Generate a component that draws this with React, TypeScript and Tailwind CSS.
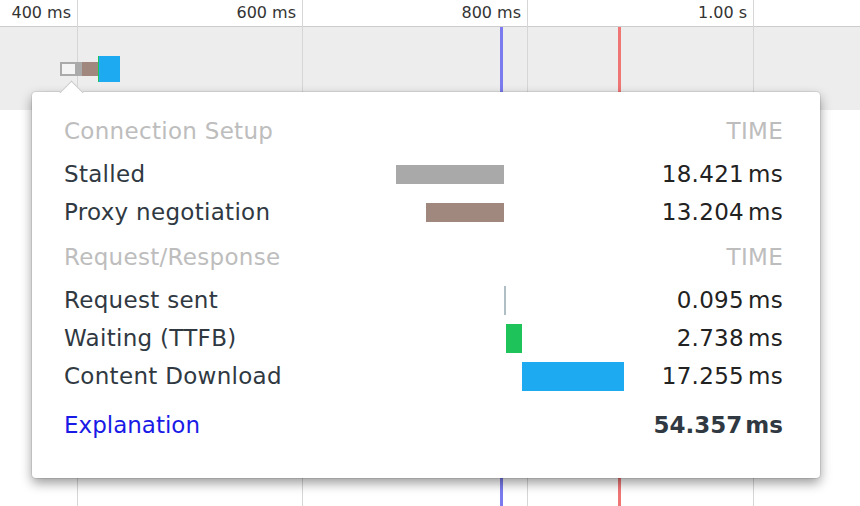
import React from "react";

/* Timeline ticks: x of the grid line and the label right-aligned to it. */
const ticks = [
  { x: 77, label: "400 ms" },
  { x: 302, label: "600 ms" },
  { x: 527, label: "800 ms" },
  { x: 753, label: "1.00 s" },
];

type Row = {
  label: string;
  value: string;
  /* Bar offset + width inside the 260px bar column. */
  left: number;
  width: number;
  color: string;
};

const setupRows: Row[] = [
  { label: "Stalled", value: "18.421", left: 16, width: 108, color: "#a9a9a9" },
  { label: "Proxy negotiation", value: "13.204", left: 46, width: 78, color: "#a1887f" },
];

const requestRows: Row[] = [
  { label: "Request sent", value: "0.095", left: 124, width: 2, color: "#b0bec5" },
  { label: "Waiting (TTFB)", value: "2.738", left: 126, width: 16, color: "#1ec45a" },
  { label: "Content Download", value: "17.255", left: 142, width: 102, color: "#1eaaf1" },
];

function SectionHeader({ title, className }: { title: string; className?: string }) {
  return (
    <div className={`flex h-[38px] items-center justify-between text-[#bdbdbd] ${className ?? ""}`}>
      <span>{title}</span>
      <span>TIME</span>
    </div>
  );
}

function TimingRow({ r, barH }: { r: Row; barH: string }) {
  return (
    <div className="flex h-[38px] items-center text-[#303942]">
      <span className="w-[316px] shrink-0">{r.label}</span>
      <div className="relative flex h-full w-[260px] shrink-0 items-center">
        <div
          className={barH}
          style={{ marginLeft: r.left, width: r.width, backgroundColor: r.color }}
        />
      </div>
      <span className="flex-1 text-right text-[#222]">
        {r.value}
        <span className="ml-[4px]">ms</span>
      </span>
    </div>
  );
}

export default function App() {
  return (
    <div className="relative h-[506px] w-[860px] overflow-hidden bg-white font-['DejaVu_Sans',sans-serif]">
      <div className="h-[27px] border-b border-[#cccccc] bg-white" />
      <div className="h-[83px] bg-[#ededed]" />

      {ticks.map((t) => (
        <div key={t.x}>
          <div
            className="absolute top-0 h-full w-px bg-[#d6d6d6]"
            style={{ left: t.x }}
          />
          <div
            className="absolute top-[3px] w-[200px] text-right text-[16px] leading-[20px] text-[#333]"
            style={{ left: t.x - 206 }}
          >
            {t.label}
          </div>
        </div>
      ))}

      {/* DOMContentLoaded / load markers */}
      <div className="absolute left-[500px] top-[27px] h-full w-[3px] bg-[#7b7bef]" />
      <div className="absolute left-[618px] top-[27px] h-full w-[3px] bg-[#f07575]" />

      {/* mini waterfall bar */}
      <div className="absolute left-[60px] top-[56px] flex h-[26px] items-center">
        <div className="h-[14px] w-[17px] border-2 border-[#aaaaaa] bg-[#f4f4f4]" />
        <div className="h-[14px] w-[5px] bg-[#aaaaaa]" />
        <div className="h-[14px] w-[16px] bg-[#a1887f]" />
        <div className="h-full w-[1px] bg-[#1ec45a]" />
        <div className="h-full w-[21px] bg-[#1eaaf1]" />
      </div>

      {/* popover */}
      <div className="absolute left-[32px] top-[92px] w-[788px] rounded-[4px] bg-white px-[32px] pb-[34px] pr-[37px] pt-[20px] text-[23px] tracking-[0.3px] shadow-[0_0_0_1px_rgba(0,0,0,0.08),0_5px_12px_rgba(0,0,0,0.4)]">
        <div className="absolute -top-[8px] left-[31px] h-[17px] w-[17px] rotate-45 border-l border-t border-[#c8c8c8] bg-white" />
        <div className="relative">
          <SectionHeader title="Connection Setup" className="mb-[5px]" />
          {setupRows.map((r) => (
            <TimingRow key={r.label} r={r} barH="h-[19px]" />
          ))}
          <SectionHeader title="Request/Response" className="mb-[5px] mt-[7px]" />
          {requestRows.map((r) => (
            <TimingRow key={r.label} r={r} barH="h-[29px]" />
          ))}
          <div className="mt-[11px] flex h-[38px] items-center justify-between">
            <span className="tracking-normal text-[#1a1ae6]">Explanation</span>
            <span className="font-bold tracking-normal text-[#303942]">
              54.357<span className="ml-[3px]">ms</span>
            </span>
          </div>
        </div>
      </div>
    </div>
  );
}
